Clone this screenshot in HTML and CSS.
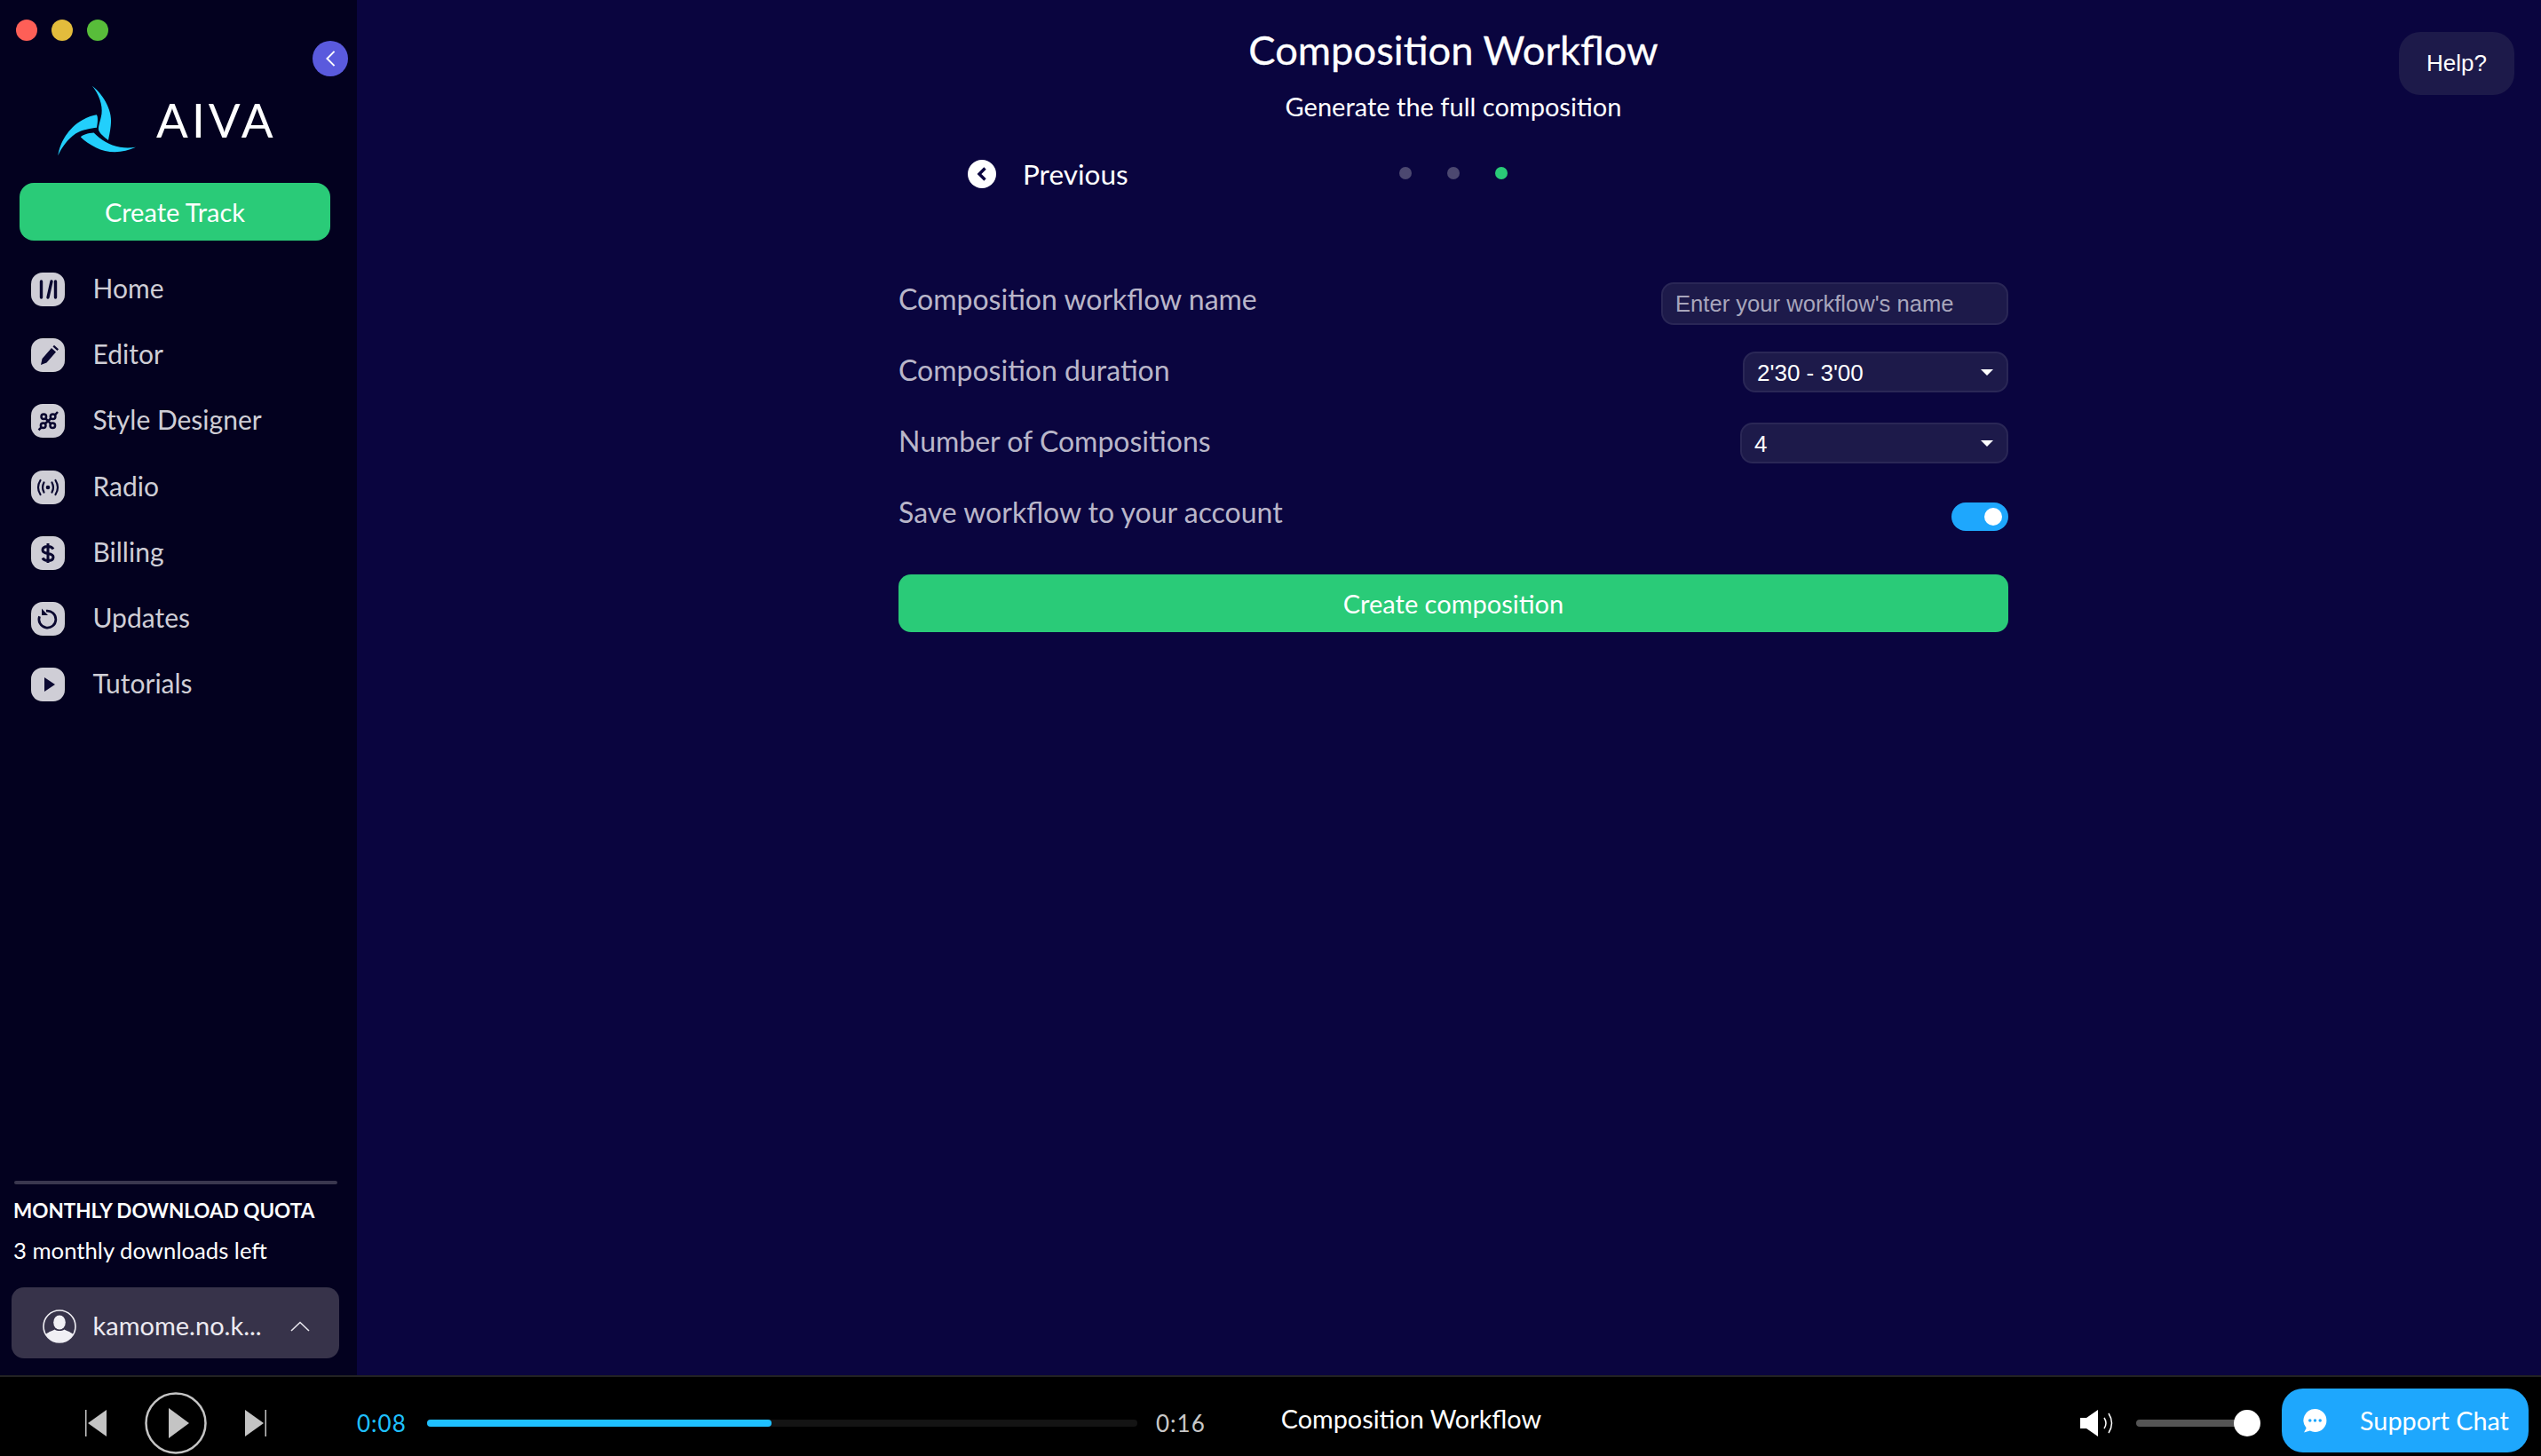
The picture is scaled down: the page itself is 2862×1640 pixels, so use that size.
FILE: index.html
```html
<!DOCTYPE html>
<html lang="en">
<head>
<meta charset="utf-8">
<title>AIVA - Composition Workflow</title>
<link rel="stylesheet" href="styles.css">
</head>
<body>
<div class="app">
  <aside class="sidebar">
    <div class="lights"><i class="light red"></i><i class="light yellow"></i><i class="light green"></i></div>
    <button class="collapse" aria-label="Collapse"><svg viewBox="0 0 16 24" width="13" height="20"><path d="M13 2 3 12l10 10" fill="none" stroke="#fff" stroke-width="2.4"/></svg></button>
    <div class="brand">
      <svg class="logo" viewBox="180 285 270 245" width="92" height="84"><g fill="#22cffc">
        <path d="M303 292C345 325 372 380 364 425 362 445 358 460 356 472 342 460 328 450 324 438 322 425 330 410 334 385 338 355 325 320 303 292Z"/>
        <path d="M190 523C195 480 225 430 270 405 290 395 305 390 317 388 322 392 322 410 318 430 300 432 270 436 248 450 222 468 202 495 190 523Z"/>
        <path d="M447 495C405 515 355 517 315 496 295 486 278 475 265 462 268 454 290 448 308 447 330 470 360 488 395 495 415 498 432 497 447 495Z"/>
      </g></svg>
      <span class="brand-name">AIVA</span>
    </div>
    <a class="create-track">Create Track</a>
    <nav class="nav">
      <a class="nav-item"><span class="nav-icon"><svg viewBox="0 0 38 38"><path d="M11.500 10v18M19 28l4-18M27.500 10v18" stroke="#0a0830" stroke-width="3.400" fill="none" stroke-linecap="round"/></svg></span><span class="nav-label">Home</span></a>
      <a class="nav-item"><span class="nav-icon"><svg viewBox="0 0 38 38"><path d="M11 30l1.500-7L23 11l5 4.500L17.500 27.500Z M24.500 9.500l1.500-1.700 5 4.400-1.500 1.800Z" fill="#0a0830"/></svg></span><span class="nav-label">Editor</span></a>
      <a class="nav-item"><span class="nav-icon"><svg viewBox="0 0 38 38"><g fill="none" stroke="#0a0830" stroke-width="2.500"><circle cx="14.300" cy="14.300" r="2.800"/><circle cx="24.600" cy="14.300" r="2.800"/><circle cx="24.300" cy="24.300" r="2.800"/><circle cx="13.700" cy="24.300" r="2.800"/><path d="M16.500 16.500l5.800 5.800M22.500 16.300l-6.800 6M27 12.300l3-3.300M11.500 26.500l-3 2.800"/></g></svg></span><span class="nav-label">Style Designer</span></a>
      <a class="nav-item"><span class="nav-icon"><svg viewBox="0 0 38 38"><g fill="none" stroke="#0a0830" stroke-width="2.200" stroke-linecap="round"><path d="M14.500 13.500q-3 5.500 0 11M23.500 13.500q3 5.500 0 11M10.500 11q-5 8 0 16M27.500 11q5 8 0 16"/></g><circle cx="19" cy="19" r="2.300" fill="#0a0830"/></svg></span><span class="nav-label">Radio</span></a>
      <a class="nav-item"><span class="nav-icon"><svg viewBox="0 0 38 38"><path d="M25 14.500c-1-2-3-3-6-3-3.500 0-6 1.500-6 4s2.500 3.500 6 4 6 1.500 6 4-2.500 4-6 4c-3 0-5-1-6-3M19 8v22" fill="none" stroke="#0a0830" stroke-width="3"/></svg></span><span class="nav-label">Billing</span></a>
      <a class="nav-item"><span class="nav-icon"><svg viewBox="0 0 38 38"><path d="M17 10.200a9.500 9.500 0 1 1-7.500 6" fill="none" stroke="#0a0830" stroke-width="2.700"/><path d="M12 7.500v7.500h7Z" fill="#0a0830"/></svg></span><span class="nav-label">Updates</span></a>
      <a class="nav-item"><span class="nav-icon"><svg viewBox="0 0 38 38"><path d="M15 11l12 8-12 8Z" fill="#0a0830"/></svg></span><span class="nav-label">Tutorials</span></a>
    </nav>
    <div class="quota">
      <div class="quota-rule"></div>
      <div class="quota-title">MONTHLY DOWNLOAD QUOTA</div>
      <div class="quota-left">3 monthly downloads left</div>
    </div>
    <div class="user">
      <svg class="avatar" viewBox="0 0 38 38" width="38" height="38"><circle cx="19" cy="19" r="18" fill="none" stroke="#f0eff4" stroke-width="1.600"/><ellipse cx="19" cy="14.500" rx="6.800" ry="8" fill="#f0eff4"/><path d="M3.500 28c4-3.500 8-4 10-5.500 3 2 8 2 11 0 2 1.500 6 2 10 5.500a18 18 0 0 1-31 0Z" fill="#f0eff4"/></svg>
      <span class="user-name">kamome.no.k...</span>
      <svg class="user-chevron" viewBox="0 0 22 12" width="22" height="12"><path d="M1 11 11 1.500 21 11" fill="none" stroke="#e8e7ee" stroke-width="1.600"/></svg>
    </div>
  </aside>

  <main class="main">
    <a class="help">Help?</a>
    <h1 class="title">Composition Workflow</h1>
    <p class="subtitle">Generate the full composition</p>
    <div class="stepper">
      <a class="previous"><svg viewBox="0 0 32 32" width="32" height="32"><circle cx="16" cy="16" r="16" fill="#fff"/><path d="M19.500 9.500 13 16l6.500 6.500" fill="none" stroke="#0a053f" stroke-width="3.400"/></svg>Previous</a>
      <div class="dots"><i class="dot"></i><i class="dot"></i><i class="dot active"></i></div>
    </div>
    <form class="form">
      <div class="row"><span class="label">Composition workflow name</span><input class="field input" placeholder="Enter your workflow's name"></div>
      <div class="row"><span class="label">Composition duration</span><div class="field select select-duration">2'30 - 3'00<i class="caret"></i></div></div>
      <div class="row"><span class="label">Number of Compositions</span><div class="field select select-number">4<i class="caret"></i></div></div>
      <div class="row"><span class="label">Save workflow to your account</span><div class="toggle"><i class="knob"></i></div></div>
      <a class="submit">Create composition</a>
    </form>
  </main>

  <footer class="player">
    <div class="transport">
      <svg viewBox="0 0 24 30" width="24" height="30"><path d="M24 0v30L3 15Z" fill="#c4c4c4"/><rect x="0" width="1.500" height="30" fill="#c4c4c4"/></svg>
      <svg viewBox="0 0 70 70" width="70" height="70"><circle cx="35" cy="35" r="33.500" fill="none" stroke="#c4c4c4" stroke-width="2.500"/><path d="M27 18v34l23-17Z" fill="#c4c4c4"/></svg>
      <svg viewBox="0 0 24 30" width="24" height="30"><path d="M0 0v30L21 15Z" fill="#c4c4c4"/><rect x="22.500" width="1.500" height="30" fill="#c4c4c4"/></svg>
    </div>
    <span class="time elapsed">0:08</span>
    <div class="progress"><div class="progress-fill"></div></div>
    <span class="time total">0:16</span>
    <span class="track-title">Composition Workflow</span>
    <svg class="volume-icon" viewBox="0 0 39 30" width="39" height="30"><path d="M0 9h7L20 0v30L7 21H0Z" fill="#fff"/><path d="M27 9q4 6 0 12M32 4q7 11 0 22" fill="none" stroke="#fff" stroke-width="1.500"/></svg>
    <div class="volume"><i class="volume-knob"></i></div>
    <a class="support">
      <svg viewBox="0 0 26 28" width="27" height="29"><path d="M13 1a12.500 12.500 0 0 1 0 25c-2 0-4-.5-5.500-1.300L1 26.500l2.500-4.800A12.500 12.500 0 0 1 13 1Z" fill="#fff"/><g fill="#1ea7fd"><circle cx="7.500" cy="13.500" r="1.700"/><circle cx="13" cy="13.500" r="1.700"/><circle cx="18.500" cy="13.500" r="1.700"/></g></svg>
      <span>Support Chat</span>
    </a>
  </footer>
</div>
</body>
</html>
```
FILE: styles.css
```css
* { box-sizing: border-box; }
html, body { margin: 0; height: 100%; }
body { background: #0a053f; font-family: Lato, "Liberation Sans", sans-serif; color: #fff; overflow: hidden; }
a { color: inherit; text-decoration: none; }
i { display: block; }

.app { display: grid; grid-template-columns: 402px 1fr; grid-template-rows: 1549px 91px; height: 1640px; }

/* Sidebar */
.sidebar { position: relative; background: #03011f; display: flex; flex-direction: column; }
.lights { display: flex; gap: 16px; padding: 22px 0 0 18px; }
.light { width: 24px; height: 24px; border-radius: 50%; }
.red { background: #fe5f57; }
.yellow { background: #e3bc3c; }
.green { background: #58bd3a; }
.collapse { position: absolute; left: 352px; top: 46px; width: 40px; height: 40px; padding: 0; border: 0; border-radius: 50%; background: #5a5add; display: flex; align-items: center; justify-content: center; }

.brand { display: flex; align-items: center; margin: 50px 0 0 62px; height: 80px; }
.logo { display: block; flex: none; }
.brand-name { margin: 0 0 4px 22px; font-size: 53px; letter-spacing: 4px; line-height: 1; color: #fff; }

.create-track { display: flex; align-items: center; justify-content: center; margin: 30px 30px 0 22px; height: 65px; border-radius: 16px; background: #2acb78; font-size: 29px; color: #fff; }

.nav { display: flex; flex-direction: column; margin-top: 18px; }
.nav-item { display: flex; align-items: center; gap: 31.500px; height: 74.200px; padding-left: 35px; font-size: 30px; color: #cfced6; }
.nav-label { margin-bottom: 4px; }
.nav-icon { width: 38px; height: 38px; border-radius: 13px; background: #cfced6; display: block; flex: none; }
.nav-icon svg { display: block; width: 38px; height: 38px; }

.quota { margin-top: auto; padding: 0 22px 0 16px; }
.quota-rule { height: 4px; border-radius: 2px; background: #3a374f; }
.quota-title { margin: 18px 0 0 -1px; font-size: 22.500px; font-weight: 700; line-height: 24px; white-space: nowrap; }
.quota-left { margin: 17px 0 0 -1px; font-size: 25.700px; line-height: 30px; white-space: nowrap; }
.user { display: flex; align-items: center; margin: 27px 20px 19px 13px; height: 80px; border-radius: 14px; background: #37334a; padding: 8px 0 0 35px; }
.avatar { flex: none; }
.user-name { margin: 0 0 4px 18.500px; font-size: 29px; color: #eceaf1; white-space: nowrap; }
.user-chevron { margin-left: 32.500px; flex: none; }

/* Main */
.main { position: relative; display: flex; flex-direction: column; align-items: center; padding-left: 10px; }
.help { position: absolute; top: 36px; right: 30px; width: 130px; height: 71px; border-radius: 24px; background: #1d1a4a; display: flex; align-items: center; justify-content: center; font-family: "Liberation Sans", sans-serif; font-size: 26px; }
.title { margin: 26px 0 0; font-size: 45.300px; font-weight: 400; line-height: 60px; -webkit-text-stroke: .3px #fff; }
.subtitle { margin: 16px 0 0; font-size: 29px; line-height: 36px; }
.stepper { width: 1250px; display: flex; align-items: center; height: 46px; margin-top: 35px; position: relative; }
.previous { display: flex; align-items: center; gap: 30px; margin-left: 78px; font-size: 31.500px; color: #fff; }
.dots { position: absolute; left: 564px; top: 15px; display: flex; gap: 40px; }
.dot { width: 14px; height: 14px; border-radius: 50%; background: #4c4870; }
.dot.active { background: #2acb78; }

.form { width: 1250px; margin-top: 80px; display: flex; flex-direction: column; }
.row { display: flex; justify-content: space-between; align-items: center; height: 80px; }
.label { font-size: 32px; color: #b9b6c9; margin-bottom: 6px; }
.field { display: block; height: 46px; border-radius: 14px; border: 2px solid #2a2756; background: #1d1a4a; color: #fff; font-family: "Liberation Sans", sans-serif; font-size: 26px; }
.input { width: 391px; padding: 0 14px; height: 48px; margin-top: 6px; font-size: 25.600px; outline: none; }
.input::placeholder { color: #a8a6bc; opacity: 1; }
.select { position: relative; display: flex; align-items: center; padding: 2px 14px 0; }
.select-duration { width: 299px; }
.select-number { width: 302px; }
.caret { position: absolute; right: 15px; top: 18px; border: 7px solid transparent; border-top: 7px solid #fff; border-bottom: 0; }
.toggle { width: 64px; height: 32px; border-radius: 16px; background: #1ea7fd; position: relative; margin-top: 6px; }
.knob { position: absolute; right: 7px; top: 6px; width: 20px; height: 20px; border-radius: 50%; background: #fff; }
.submit { display: flex; align-items: center; justify-content: center; height: 65px; margin-top: 28px; border-radius: 14px; background: #2acb78; font-size: 29px; color: #fff; }

/* Player */
.player { grid-column: 1 / -1; display: flex; align-items: center; background: #000; border-top: 2px solid #222; padding-top: 15px; }
.transport { display: flex; align-items: center; gap: 43px; margin-left: 96px; }
.transport svg { display: block; flex: none; }
.time { font-size: 26px; letter-spacing: 1px; white-space: nowrap; }
.elapsed { margin-left: 102px; color: #1fc0ff; width: 79px; }
.progress { width: 800px; height: 8px; border-radius: 4px; background: #141414; }
.progress-fill { width: 388px; height: 100%; border-radius: 4px; background: #1fc0ff; }
.total { margin-left: 21px; color: #c8c8c8; }
.track-title { margin: 0 0 10px 85px; font-size: 28.800px; white-space: nowrap; }
.volume-icon { margin-left: auto; flex: none; }
.volume { position: relative; flex: none; width: 125px; height: 8px; border-radius: 4px; background: #555; margin-left: 24px; }
.volume-knob { position: absolute; right: -15px; top: -11px; width: 30px; height: 30px; border-radius: 50%; background: #fff; }
.support { display: flex; align-items: center; gap: 37px; flex: none; align-self: flex-start; width: 278px; height: 72px; margin: -2px 14px 0 39px; padding-left: 24px; border-radius: 24px; background: #1ea7fd; font-size: 28.800px; color: #fff; white-space: nowrap; }
.support svg { flex: none; }
```
